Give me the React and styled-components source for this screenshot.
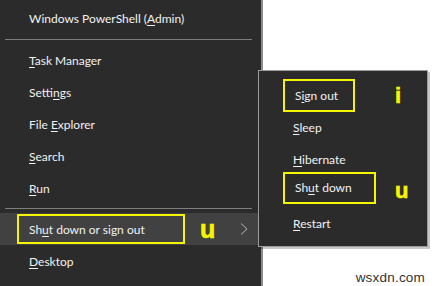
import React from "react";
import styled, { createGlobalStyle } from "styled-components";

const GlobalStyle = createGlobalStyle`
  html, body {
    margin: 0;
    padding: 0;
    background: #ffffff;
  }
  body {
    font-family: Lato, "Noto Sans", sans-serif;
  }
`;

const Screen = styled.div`
  position: relative;
  display: flex;
  width: 437px;
  height: 286px;
  overflow: hidden;
  background: #ffffff;
`;

const MainMenu = styled.div`
  display: flex;
  flex-direction: column;
  width: 263px;
  height: 286px;
  padding-top: 2px;
  box-sizing: border-box;
  background: #2b2b2b;
  border-right: 2px solid #8c8c8c;
`;

const Row = styled.div`
  display: flex;
  align-items: center;
  height: 32px;
  padding-left: ${(p) => (p.$boxed ? "17px" : "29px")};
  padding-right: 13px;
  background: ${(p) => (p.$active ? "#414141" : "transparent")};
  color: #f2f2f2;
  font-size: 12px;
  white-space: pre;
`;

const Label = styled.span`
  white-space: pre;
`;

const Separator = styled.div`
  height: 1px;
  margin: ${(p) => p.$margin};
  margin-left: 5px;
  margin-right: 9px;
  background: #7d7d7d;
`;

const Key = styled.span`
  text-decoration: underline;
  text-underline-offset: 2px;
  text-decoration-thickness: 1px;
`;

const Boxed = styled.div`
  display: flex;
  align-items: center;
  box-sizing: border-box;
  width: ${(p) => p.$w}px;
  height: ${(p) => p.$h}px;
  padding-left: 10px;
  border: 2px solid #f5f500;
  margin-top: ${(p) => p.$shift || 0}px;
`;

const Mark = styled.span`
  margin-left: ${(p) => p.$gap}px;
  color: #f5f500;
  font-family: "Liberation Sans", Arial, sans-serif;
  font-weight: 700;
  font-size: ${(p) => p.$size}px;
  line-height: 1;
  -webkit-text-stroke: 0.6px #f5f500;
`;

const Chevron = styled.svg`
  margin-left: auto;
  width: 8px;
  height: 12px;
`;

const Right = styled.div`
  flex: 1;
  display: flex;
  flex-direction: column;
  justify-content: flex-end;
  align-items: flex-end;
  padding: 0 12px 1px 0;
`;

const Watermark = styled.span`
  font-family: "Liberation Sans", Arial, sans-serif;
  font-size: 13.5px;
  color: #333333;
  letter-spacing: 0.2px;
`;

const SubMenu = styled.div`
  position: absolute;
  left: 258px;
  top: 70px;
  width: 170px;
  height: 177px;
  box-sizing: border-box;
  padding-top: 8px;
  background: #2b2b2b;
  border: 1px solid #9c9c9c;
  box-shadow: 2px 2px 0 rgba(0, 0, 0, 0.22);
`;

const SubRow = styled.div`
  display: grid;
  grid-template-columns: 136px auto;
  align-items: center;
  height: 32px;
  color: #f2f2f2;
  font-size: 12px;
  white-space: pre;
`;

const SubLabel = styled.div`
  padding-left: ${(p) => (p.$boxed ? "24px" : "34px")};
`;

const SubText = ({ children, box }) =>
  box ? (
    <SubLabel $boxed>
      <Boxed $w={box.w} $h={box.h} $shift={box.shift}>
        <Label>{children}</Label>
      </Boxed>
    </SubLabel>
  ) : (
    <SubLabel>
      <Label>{children}</Label>
    </SubLabel>
  );

const App = () => {
  return (
    <>
      <GlobalStyle />
      <Screen>
        <MainMenu>
          <Row>
            <Label>
              Windows PowerShell (<Key>A</Key>dmin)
            </Label>
          </Row>
          <Separator $margin="5px 0 4px" />
          <Row>
            <Label>
              <Key>T</Key>ask Manager
            </Label>
          </Row>
          <Row>
            <Label>
              Setti<Key>n</Key>gs
            </Label>
          </Row>
          <Row>
            <Label>
              File <Key>E</Key>xplorer
            </Label>
          </Row>
          <Row>
            <Label>
              <Key>S</Key>earch
            </Label>
          </Row>
          <Row>
            <Label>
              <Key>R</Key>un
            </Label>
          </Row>
          <Separator $margin="4px 0 4px" />
          <Row $active $boxed>
            <Boxed $w={168} $h={30}>
              <Label>
                Sh<Key>u</Key>t down or sign out
              </Label>
            </Boxed>
            <Mark $gap={15} $size={25}>
              u
            </Mark>
            <Chevron viewBox="0 0 8 12">
              <polyline
                points="1,0.5 7,6 1,11.5"
                fill="none"
                stroke="#b5b5b5"
                strokeWidth="1"
              />
            </Chevron>
          </Row>
          <Row>
            <Label>
              <Key>D</Key>esktop
            </Label>
          </Row>
        </MainMenu>
        <Right>
          <Watermark>wsxdn.com</Watermark>
        </Right>
        <SubMenu>
          <SubRow>
            <SubText box={{ w: 72, h: 33 }}>
              S<Key>i</Key>gn out
            </SubText>
            <Mark $gap={0} $size={22}>
              i
            </Mark>
          </SubRow>
          <SubRow>
            <SubText>
              <Key>S</Key>leep
            </SubText>
          </SubRow>
          <SubRow>
            <SubText>
              <Key>H</Key>ibernate
            </SubText>
          </SubRow>
          <SubRow>
            <SubText box={{ w: 93, h: 32, shift: -7 }}>
              Sh<Key>u</Key>t down
            </SubText>
            <Mark $gap={0} $size={22}>
              u
            </Mark>
          </SubRow>
          <SubRow>
            <SubText>
              <Key>R</Key>estart
            </SubText>
          </SubRow>
        </SubMenu>
      </Screen>
    </>
  );
};

export default App;
